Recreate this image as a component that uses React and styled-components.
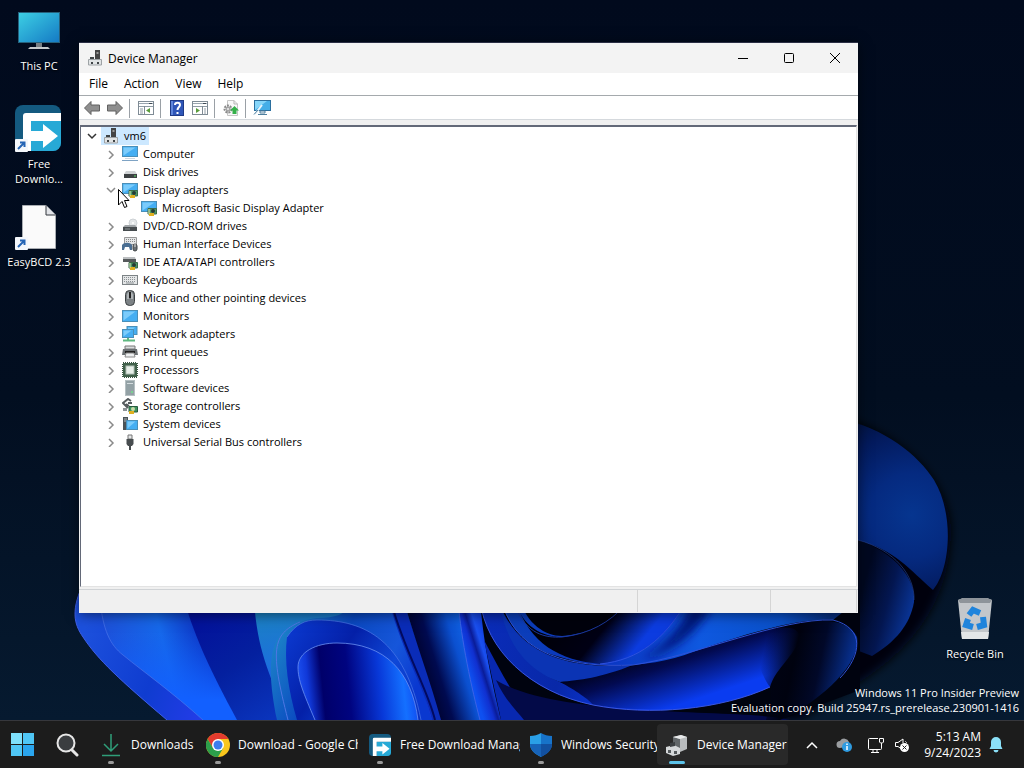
import React, { useState } from 'react'
import styled, { createGlobalStyle } from 'styled-components'

const GlobalStyle = createGlobalStyle`
  * {
    box-sizing: border-box;
  }
  body {
    margin: 0;
    background: #020b1c;
    font-family: 'Open Sans', 'Noto Sans', sans-serif;
    font-size: 12px;
  }
  button {
    font: inherit;
    color: inherit;
    background: none;
    border: 0;
    padding: 0;
  }
  ul {
    list-style: none;
    margin: 0;
    padding: 0;
  }
  svg {
    display: block;
    flex: none;
  }
`

const Screen = styled.div`
  display: grid;
  grid-template-rows: 1fr auto;
  height: 100vh;
  min-height: 480px;
`

const Desktop = styled.main`
  position: relative;
  overflow: hidden;
`

const WallpaperSvg = styled.svg`
  position: absolute;
  inset: 0;
  width: 100%;
  height: 100%;
`

/* desktop icons */

const ShortcutColumn = styled.div`
  position: absolute;
  top: 7px;
  left: 0;
  width: 78px;
`

const BinSpot = styled.div`
  position: absolute;
  right: 10px;
  bottom: 27px;
  width: 78px;
`

const ShortcutButton = styled.button`
  display: flex;
  flex-direction: column;
  align-items: center;
  gap: 3px;
  width: 100%;
  height: 98px;
  padding: 0 6px;
  color: #fff;
  font-size: 11px;
  line-height: 15px;
  text-shadow: 0 1px 2px #000;
  text-align: center;
`

const Watermark = styled.p`
  position: absolute;
  right: 5px;
  bottom: 5px;
  margin: 0;
  color: #fff;
  font-size: 11px;
  line-height: 15px;
  text-align: right;
`

const Pointer = styled.svg`
  position: absolute;
  top: 188px;
  left: 117px;
`

/* device manager window */

const Window = styled.section`
  position: absolute;
  top: 42px;
  right: 166px;
  bottom: 107px;
  left: 79px;
  display: flex;
  flex-direction: column;
  border-top: 1px solid #2b2f45;
  background: #f0f0f0;
  color: #000;
  box-shadow: 0 2px 12px rgba(0, 0, 0, 0.5);
`

const TitleBar = styled.header`
  display: flex;
  align-items: center;
  height: 30px;
  padding-left: 8px;
  background: #f3f3f3;
`

const Title = styled.h1`
  flex: 1;
  margin: 0 0 0 5px;
  font-size: 12px;
  font-weight: 400;
`

const CaptionButton = styled.button`
  display: grid;
  place-items: center;
  width: 46px;
  height: 100%;
  &:hover {
    background: #e5e5e5;
  }
`

const MenuBar = styled.nav`
  display: flex;
  height: 23px;
  padding-left: 2px;
  background: #fff;
  border-bottom: 1px solid #a5aaad;
`

const MenuButton = styled.button`
  padding: 0 8px;
  font-size: 12px;
  line-height: 20px;
  &:hover {
    background: #cce8ff;
  }
`

const Toolbar = styled.div`
  display: flex;
  align-items: center;
  height: 24px;
  padding: 1px 0 0 1px;
  background: #fff;
  border-bottom: 1px solid #d5d9dd;
`

const ToolButton = styled.button`
  display: grid;
  place-items: center;
  width: 23px;
  height: 22px;
`

const Separator = styled.span`
  width: 1px;
  height: 19px;
  margin: 0 4px 0 3px;
  background: #9aa0a6;
`

const TreePane = styled.div`
  flex: 1;
  min-height: 0;
  margin: 5px 1px 0;
  overflow: hidden;
  background: #fff;
  border: 1px solid #636978;
  border-top-width: 2px;
  border-right-color: #e3e3e3;
  border-bottom-color: #e3e3e3;
`

const Row = styled.div`
  display: flex;
  align-items: center;
  height: 18px;
  padding-left: ${({ $level }) => 1 + $level * 19}px;
`

const Twisty = styled.button`
  display: grid;
  place-items: center;
  width: 19px;
  height: 18px;
`

const TwistySpace = styled.span`
  width: 19px;
`

const NodeBody = styled.span`
  display: flex;
  align-items: center;
  gap: 5px;
  padding: 0 3px 0 2px;
  font-size: 11px;
  line-height: 18px;
  background: ${({ $selected }) => ($selected ? '#cce8ff' : 'transparent')};
`

const StatusBar = styled.footer`
  display: flex;
  height: 24px;
  margin-top: 2px;
  padding-right: 1px;
  border-top: 1px solid #d0d3d6;
`

const StatusCell = styled.div`
  flex: ${({ $width }) => ($width ? `0 0 ${$width}px` : '1')};
  margin-bottom: 1px;
  border-right: 1px solid #d5d5d5;
`

/* taskbar */

const TaskbarWrapper = styled.footer`
  display: flex;
  height: 48px;
  padding-left: 1px;
  background: #1c1c1c;
  border-top: 1px solid #36373c;
  color: #fff;
`

const PinButton = styled.button`
  display: grid;
  place-items: center;
  width: 44px;
`

const TaskList = styled.nav`
  display: flex;
  flex: 1;
  min-width: 0;
  margin-left: 2px;
`

const TaskButton = styled.button`
  position: relative;
  display: flex;
  align-items: center;
  gap: 8px;
  flex: 0 1 ${({ $width }) => $width}px;
  min-width: 40px;
  margin: 3px 0;
  padding-left: 8px;
  border-radius: 4px;
  background: ${({ $active }) => ($active ? '#292929' : 'transparent')};
  &::after {
    content: '';
    position: absolute;
    bottom: 1px;
    left: 20px;
    width: ${({ $active }) => ($active ? 16 : 6)}px;
    height: 3px;
    border-radius: 2px;
    background: ${({ $active }) => ($active ? '#5cc3ea' : '#9a9a9a')};
    transform: translateX(-50%);
  }
`

const TaskLabel = styled.span`
  max-width: 120px;
  overflow: hidden;
  font-size: 12px;
  line-height: 20px;
  white-space: nowrap;
`

const Tray = styled.div`
  display: flex;
  flex: none;
  align-items: center;
  padding-right: 14px;
`

const TrayButton = styled.button`
  display: grid;
  place-items: center;
  width: ${({ $width }) => $width || 32}px;
  height: 40px;
`

const ClockButton = styled.button`
  width: 69px;
  font-size: 12px;
  line-height: 16px;
  text-align: right;
`

const Wallpaper = () => (
  <WallpaperSvg viewBox="0 0 1024 720" preserveAspectRatio="xMidYMid slice" aria-hidden="true">
    <defs>
      <linearGradient id="sky" x1="0" y1="0" x2="0" y2="1">
        <stop offset="0" stopColor="#010a1d" />
        <stop offset="0.55" stopColor="#020e20" />
        <stop offset="1" stopColor="#061a30" />
      </linearGradient>
      <linearGradient id="petalA" gradientUnits="userSpaceOnUse" x1="80" y1="640" x2="230" y2="700">
        <stop offset="0" stopColor="#1c50dc" />
        <stop offset="0.5" stopColor="#0f3cd0" />
        <stop offset="1" stopColor="#2a3cf0" />
      </linearGradient>
      <linearGradient id="petalB" gradientUnits="userSpaceOnUse" x1="105" y1="640" x2="225" y2="610">
        <stop offset="0" stopColor="#1d50d8" />
        <stop offset="0.45" stopColor="#1668ea" />
        <stop offset="0.8" stopColor="#0c30c0" />
        <stop offset="1" stopColor="#061c9c" />
      </linearGradient>
      <linearGradient id="petalBLow" gradientUnits="userSpaceOnUse" x1="0" y1="630" x2="0" y2="700">
        <stop offset="0" stopColor="#1060ff" stopOpacity="0" />
        <stop offset="1" stopColor="#1260ff" />
      </linearGradient>
      <linearGradient id="deep" gradientUnits="userSpaceOnUse" x1="200" y1="613" x2="270" y2="720">
        <stop offset="0" stopColor="#03119a" />
        <stop offset="0.5" stopColor="#04209f" />
        <stop offset="1" stopColor="#0a34bc" />
      </linearGradient>
      <linearGradient id="teal" gradientUnits="userSpaceOnUse" x1="270" y1="613" x2="290" y2="715">
        <stop offset="0" stopColor="#1b80c4" />
        <stop offset="0.5" stopColor="#1c70dc" />
        <stop offset="1" stopColor="#2440f0" />
      </linearGradient>
      <linearGradient id="band" gradientUnits="userSpaceOnUse" x1="290" y1="613" x2="420" y2="680">
        <stop offset="0" stopColor="#1b80c8" />
        <stop offset="0.4" stopColor="#0a48c0" />
        <stop offset="0.75" stopColor="#1656da" />
        <stop offset="1" stopColor="#0a38d0" />
      </linearGradient>
      <linearGradient id="arch" gradientUnits="userSpaceOnUse" x1="285" y1="620" x2="420" y2="710">
        <stop offset="0" stopColor="#0c3cd4" />
        <stop offset="0.4" stopColor="#0420a8" />
        <stop offset="0.7" stopColor="#0e48d8" />
        <stop offset="1" stopColor="#0830c0" />
      </linearGradient>
      <linearGradient id="cave" gradientUnits="userSpaceOnUse" x1="298" y1="680" x2="416" y2="668">
        <stop offset="0" stopColor="#1c50f0" />
        <stop offset="0.08" stopColor="#1038d8" />
        <stop offset="0.2" stopColor="#00006a" />
        <stop offset="0.42" stopColor="#000480" />
        <stop offset="0.68" stopColor="#0838d8" />
        <stop offset="0.88" stopColor="#1470ff" />
        <stop offset="1" stopColor="#1048f0" />
      </linearGradient>
      <linearGradient id="fold" gradientUnits="userSpaceOnUse" x1="415" y1="665" x2="480" y2="645">
        <stop offset="0" stopColor="#000024" />
        <stop offset="0.3" stopColor="#000a50" />
        <stop offset="0.65" stopColor="#0b50d0" />
        <stop offset="1" stopColor="#1470f4" />
      </linearGradient>
      <linearGradient id="stem" gradientUnits="userSpaceOnUse" x1="465" y1="660" x2="497" y2="650">
        <stop offset="0" stopColor="#0e50f0" />
        <stop offset="0.3" stopColor="#1030d0" />
        <stop offset="0.42" stopColor="#0a1c98" />
        <stop offset="0.6" stopColor="#1a50f0" />
        <stop offset="1" stopColor="#0a34d0" />
      </linearGradient>
      <linearGradient id="waveLow" gradientUnits="userSpaceOnUse" x1="490" y1="620" x2="720" y2="710">
        <stop offset="0" stopColor="#0a2cb8" />
        <stop offset="0.35" stopColor="#0828a8" />
        <stop offset="0.7" stopColor="#0a3cf0" />
        <stop offset="1" stopColor="#0a3ce8" />
      </linearGradient>
      <linearGradient id="waveCore" gradientUnits="userSpaceOnUse" x1="650" y1="648" x2="670" y2="708">
        <stop offset="0" stopColor="#000012" />
        <stop offset="0.35" stopColor="#020a50" />
        <stop offset="1" stopColor="#0a3cf0" />
      </linearGradient>
      <linearGradient id="waveTop" gradientUnits="userSpaceOnUse" x1="505" y1="613" x2="830" y2="613">
        <stop offset="0" stopColor="#0c40b8" />
        <stop offset="0.3" stopColor="#0a34c0" />
        <stop offset="0.6" stopColor="#0e58e0" />
        <stop offset="0.85" stopColor="#0a50c8" />
        <stop offset="1" stopColor="#083080" />
      </linearGradient>
      <linearGradient id="lobe" gradientUnits="userSpaceOnUse" x1="764" y1="650" x2="866" y2="672">
        <stop offset="0" stopColor="#000318" stopOpacity="0" />
        <stop offset="0.3" stopColor="#00020f" />
        <stop offset="0.55" stopColor="#010828" />
        <stop offset="1" stopColor="#0a44c4" />
      </linearGradient>
      <linearGradient id="inkFold" gradientUnits="userSpaceOnUse" x1="560" y1="610" x2="625" y2="662">
        <stop offset="0" stopColor="#000008" />
        <stop offset="0.55" stopColor="#000014" />
        <stop offset="1" stopColor="#0c3ce0" />
      </linearGradient>
      <radialGradient id="right" gradientUnits="userSpaceOnUse" cx="912" cy="515" r="120">
        <stop offset="0" stopColor="#06358f" />
        <stop offset="0.35" stopColor="#052a80" />
        <stop offset="0.7" stopColor="#031a5c" />
        <stop offset="1" stopColor="#020f30" />
      </radialGradient>
      <linearGradient id="rightInner" gradientUnits="userSpaceOnUse" x1="862" y1="590" x2="916" y2="605">
        <stop offset="0" stopColor="#010820" />
        <stop offset="0.5" stopColor="#031650" />
        <stop offset="1" stopColor="#0a379c" />
      </linearGradient>
      <filter id="soft" x="-20%" y="-20%" width="140%" height="140%">
        <feGaussianBlur stdDeviation="5" />
      </filter>
    </defs>
    <rect width="1024" height="720" fill="url(#sky)" />
    {/* right side petals */}
    <path d="M840 418C890 428 960 480 950 545C946 600 915 645 867 677L800 720H500V420Z" fill="#00040f" filter="url(#soft)" />
    <path d="M840 419C885 428 918 455 934 480C955 515 950 570 933 590C910 570 895 550 858 540H800Z" fill="url(#right)" />
    <path d="M840 536C880 542 916 570 914 602C910 625 895 642 872 656L830 640Z" fill="url(#rightInner)" />
    <path d="M858 540C895 550 915 576 914 600" fill="none" stroke="#2448a0" strokeOpacity="0.6" />
    {/* bottom, left to right */}
    <path d="M85 580C70 610 74 624 83 637C98 660 120 680 167 720H720V580Z" fill="url(#petalA)" />
    <path d="M85 580C70 610 74 624 83 637C98 660 120 680 167 720" fill="none" stroke="#3f5ee6" />
    <path d="M100 600C103 630 110 645 123 655C145 673 172 692 203 720H300V600Z" fill="url(#petalB)" />
    <path d="M100 600C103 630 110 645 123 655C145 673 172 692 203 720H300V600Z" fill="url(#petalBLow)" />
    <path d="M100 600C103 630 110 645 123 655C145 673 172 692 203 720" fill="none" stroke="#4a74ea" strokeOpacity="0.7" />
    <path d="M184 600C196 640 210 670 237 720H320V600Z" fill="url(#deep)" />
    <path d="M254 600C257 648 268 672 288 720H420V600Z" fill="url(#teal)" />
    <path d="M277 720C262 645 275 624 317 618C355 618 350 600 346 600H398C405 640 424 690 432 720Z" fill="url(#band)" />
    <path d="M288 720C270 650 272 634 300 622" fill="none" stroke="#4f76e4" />
    <path d="M297 720C288 690 284 660 287 637C296 624 305 620 317 620C365 620 405 640 421 720Z" fill="url(#arch)" />
    <path d="M287 637C296 624 305 620 317 620C365 620 405 640 421 720" fill="none" stroke="#4c78e8" strokeOpacity="0.7" />
    <path d="M315 720C303 692 298 680 298 667C298 652 316 643 337 643C385 643 412 672 418 720Z" fill="url(#cave)" />
    <path d="M315 720C303 692 298 680 298 667C298 652 316 643 337 643C385 643 412 672 418 720" fill="none" stroke="#6a90f2" strokeOpacity="0.8" />
    <path d="M390 605C402 650 425 690 432 720H444C432 680 415 640 405 605Z" fill="#0a2cb8" />
    <path d="M392 605C404 650 428 690 435 720" fill="none" stroke="#020a60" strokeWidth="2" />
    <path d="M405 605C415 640 430 680 441 720H500V600Z" fill="url(#fold)" />
    <path d="M458 600C461 640 472 690 480 720H512L494 600Z" fill="url(#stem)" />
    <path d="M458 600C461 640 472 690 480 720" fill="none" stroke="#3c62e6" />
    <path d="M480 600C484 650 494 690 501 720H780L860 690V600Z" fill="#00030f" />
    <path d="M484 640C500 670 515 700 534 720H501Z" fill="#0828b0" />
    <path d="M496 680C505 700 516 710 524 720H790C750 708 560 720 496 680Z" fill="#030a48" />
    <path d="M480 600C486 650 530 692 593 705C650 716 720 710 770 687C720 690 600 700 560 682C530 670 505 640 500 600Z" fill="url(#waveLow)" />
    <path d="M560 682C610 676 680 650 760 632C785 625 800 625 800 640C790 660 775 670 770 687C720 709 650 714 593 705C590 700 575 690 560 682Z" fill="url(#waveCore)" />
    <path d="M480 600C486 650 530 692 593 705C650 716 720 710 770 687" fill="none" stroke="#3a56e0" />
    <path d="M500 600C510 630 530 650 560 657C600 670 650 668 693 652C750 632 800 618 833 620L858 600Z" fill="url(#waveTop)" />
    <path d="M500 605C520 655 570 670 633 665C600 678 580 680 560 682C525 670 505 640 500 605Z" fill="#0b34b4" />
    <path d="M515 600C522 628 545 638 565 637C585 634 610 622 625 605H685C665 640 635 660 600 664C560 660 530 645 515 600Z" fill="url(#inkFold)" />
    <path d="M520 600C527 624 545 636 562 636C590 634 610 622 625 605Z" fill="#00020c" />
    <path d="M516 608C527 634 545 638 562 637C590 634 610 622 625 605" fill="none" stroke="#1b389c" />
    <path d="M684 606C664 638 640 660 600 664" fill="none" stroke="#2d50e0" />
    <path d="M690 606C680 630 660 650 640 660C670 655 700 630 712 606Z" fill="#04147a" filter="url(#soft)" />
    <path d="M750 636C800 620 845 612 857 637C862 665 815 705 780 720H766C770 705 772 697 770 687C764 680 756 660 750 636Z" fill="url(#lobe)" />
    <path d="M503 606C520 655 570 668 633 665C700 655 780 618 833 620C865 628 862 655 840 678" fill="none" stroke="#2f52d8" />
  </WallpaperSvg>
)

/* 16px device glyphs, one drawing for every kind of node */

const Screen16 = ({ x = 0.5, y = 1.5, w = 15, h = 10 }) => (
  <>
    <rect x={x} y={y} width={w} height={h} fill="#45aef2" stroke="#4a8fb8" />
    <path d={`M${x + 1} ${y + h - 1}L${x + w - 2} ${y + 1}H${x + 1}Z`} fill="#7cccfb" />
  </>
)

const Chip = () => (
  <>
    <path d="M7 8.500H15.500V14H7Z" fill="#4f9a68" stroke="#3c6b4a" />
    <path d="M8 13h5v3H8z" fill="#e0b020" />
    <circle cx="12" cy="11" r="2" fill="#243b36" />
    <path d="M8 9v5" stroke="#d8e6b8" />
  </>
)

const glyphs = {
  machine: (
    <>
      <path d="M8 0h5v9H8z" fill="#444" />
      <path d="M9.500 2h2v2h-2z" fill="#999" />
      <path d="M1.500 9.500h13V15H1.500z" fill="#e1e4e5" stroke="#9ea3a6" />
      <path d="M3 7h4v2H3zM4 12h2v2H4zM10 12h2v2h-2z" fill="#3f4446" />
    </>
  ),
  computer: (
    <>
      <Screen16 y={0.5} />
      <path d="M0 14.500h16" stroke="#7ea3c4" />
      <path d="M3 12.500h10" stroke="#cfd8df" />
    </>
  ),
  disk: (
    <>
      <path d="M4 7h9l2 3H2z" fill="#d0d3d5" />
      <path d="M2 10h13v4H2z" fill="#3d4143" />
      <path d="M12 12h2" stroke="#5fe06a" />
    </>
  ),
  display: (
    <>
      <Screen16 />
      <Chip />
    </>
  ),
  dvd: (
    <>
      <circle cx="11" cy="5" r="4" fill="#e2e5e7" stroke="#ced2d5" />
      <circle cx="11" cy="5" r="1" fill="#fff" />
      <path d="M3 7h10l2 2H1z" fill="#9fa4a7" />
      <path d="M1 9h14v4H1z" fill="#474c4f" />
      <path d="M3 11h5" stroke="#8e9497" />
    </>
  ),
  hid: (
    <>
      <path d="M2.500 1.500h12v7h-12z" fill="#e4e6e7" stroke="#999" />
      <path d="M4 3.500h10M4 5.500h10" stroke="#888" strokeDasharray="1 1" />
      <path d="M0 14V9c2-3 8-3 10 0v5H8L7 11H3l-1 3z" fill="#4b6f93" />
      <rect x="11" y="8" width="4" height="7" rx="2" fill="#6a7074" stroke="#3f4446" />
      <path d="M13 8v3" stroke="#ddd" />
    </>
  ),
  ide: (
    <>
      <path d="M1 3h12l1 3H1z" fill="#bcbfc1" />
      <path d="M1 5h13v3H1z" fill="#55595b" />
      <Chip />
    </>
  ),
  keyboard: (
    <>
      <rect x="0.5" y="3.500" width="15" height="9" fill="#e4e6e7" stroke="#7d8386" />
      <path d="M2 5.500h12M2 7.500h12M2 9.500h12" stroke="#8b9194" strokeDasharray="1 1" />
      <path d="M4 11h8" stroke="#8b9194" />
    </>
  ),
  mouse: (
    <>
      <rect x="3.500" y="0.5" width="9" height="15" rx="4" fill="#7c8285" stroke="#3c4143" />
      <path d="M5 9V5c0-2 2-3 2-3v7zM9 2s2 1 2 3v4H9z" fill="#aeb3b6" />
      <path d="M8 2v6" stroke="#222" strokeWidth="2" />
    </>
  ),
  monitor: <Screen16 x={0.5} y={2.5} w={15} h={11} />,
  network: (
    <>
      <Screen16 x={5} y={0.5} w={10} h={8} />
      <Screen16 x={0.5} y={3.5} w={11} h={8} />
      <path d="M6 12v2M1 14.500h12" stroke="#5fb880" strokeWidth="2" />
    </>
  ),
  printer: (
    <>
      <path d="M3 2h10v3H3z" fill="#d9dcdd" stroke="#777" />
      <path d="M1 5h14l1 6H0z" fill="#6b7073" />
      <path d="M3 8h10" stroke="#222" strokeWidth="2" />
      <path d="M4 9h8l1 4H3z" fill="#eef0f1" stroke="#888" />
    </>
  ),
  cpu: (
    <>
      <rect x="1" y="1" width="14" height="14" fill="none" stroke="#37513f" strokeWidth="2" strokeDasharray="1 1" />
      <rect x="1" y="1" width="14" height="14" fill="#41604a" />
      <rect x="4" y="4" width="8" height="8" fill="#e8efe9" stroke="#b4c2b8" />
    </>
  ),
  software: (
    <>
      <rect x="3.500" y="0.5" width="9" height="15" fill="#93a1a5" stroke="#b5bfc2" />
      <path d="M5 3.500h6" stroke="#d4dcdf" />
      <circle cx="10" cy="12" r="1" fill="#6fe08a" />
    </>
  ),
  storage: (
    <>
      <path d="M9 3L6 1L1 5L6 10M6 5h4M4 6l3 2" fill="none" stroke="#555b5e" strokeWidth="2" />
      <path d="M7 8.500h8.500V14H7z" fill="#3f9460" stroke="#285c3e" />
      <circle cx="11" cy="11" r="2" fill="#c9dca8" />
      <path d="M1 10h4v3H1z" fill="#8d9295" />
      <path d="M7 13h5v3H7z" fill="#e0b020" />
    </>
  ),
  system: (
    <>
      <path d="M1 1h5v13H1z" fill="#4b5357" />
      <path d="M2 3h3M2 5h3" stroke="#aeb6ba" />
      <Screen16 x={4.5} y={4.5} w={11} h={9} />
    </>
  ),
  usb: (
    <>
      <path d="M6 1h4v4H6z" fill="#e5e7e8" stroke="#777" />
      <path d="M4.500 5h7v5L10 12H6L4.500 10z" fill="#474c4f" />
      <path d="M8 12v4" stroke="#474c4f" strokeWidth="2" />
    </>
  ),
}

const Glyph = ({ name }) => (
  <svg width="16" height="16" viewBox="0 0 16 16" aria-hidden="true">
    {glyphs[name]}
  </svg>
)

const devices = [
  { label: 'Computer', icon: 'computer' },
  { label: 'Disk drives', icon: 'disk' },
  {
    label: 'Display adapters',
    icon: 'display',
    items: [{ label: 'Microsoft Basic Display Adapter', icon: 'display' }],
  },
  { label: 'DVD/CD-ROM drives', icon: 'dvd' },
  { label: 'Human Interface Devices', icon: 'hid' },
  { label: 'IDE ATA/ATAPI controllers', icon: 'ide' },
  { label: 'Keyboards', icon: 'keyboard' },
  { label: 'Mice and other pointing devices', icon: 'mouse' },
  { label: 'Monitors', icon: 'monitor' },
  { label: 'Network adapters', icon: 'network' },
  { label: 'Print queues', icon: 'printer' },
  { label: 'Processors', icon: 'cpu' },
  { label: 'Software devices', icon: 'software' },
  { label: 'Storage controllers', icon: 'storage' },
  { label: 'System devices', icon: 'system' },
  { label: 'Universal Serial Bus controllers', icon: 'usb' },
]

const TreeNode = ({ node, level = 0, leaf = false }) => {
  const [open, setOpen] = useState(Boolean(node.items))

  return (
    <li>
      <Row $level={level}>
        {leaf ? (
          <TwistySpace />
        ) : (
          <Twisty
            type="button"
            aria-label={`Toggle ${node.label}`}
            aria-expanded={open}
            onClick={() => setOpen(!open)}
          >
            <svg width="10" height="10" viewBox="0 0 10 10" fill="none" stroke={level ? '#8a8a8a' : '#333'} strokeWidth="1.5">
              <path d={open ? 'M1 3L5 7L9 3' : 'M3 2L7 6L3 10'} />
            </svg>
          </Twisty>
        )}
        <NodeBody $selected={level === 0}>
          <Glyph name={node.icon} />
          {node.label}
        </NodeBody>
      </Row>
      {open && node.items && (
        <ul>
          {node.items.map((item) => (
            <TreeNode key={item.label} node={item} level={level + 1} leaf={level === 1} />
          ))}
        </ul>
      )}
    </li>
  )
}

const ConsolePane = ({ flip = false }) => (
  <svg width="16" height="16" viewBox="0 0 16 16">
    <rect x="0.5" y="1.500" width="15" height="13" fill="#fff" stroke="#7f8b95" />
    <path d="M1 3.500h14" stroke="#9aa6b0" />
    <path d="M11 3.500h3" stroke="#3f4a54" />
    <path d="M1 6.500h14" stroke="#8f9ba5" />
    {flip ? (
      <>
        <path d="M10.500 6v8" stroke="#7f8b95" />
        <path d="M12 9h2M12 11h2M12 13h2" stroke="#8f9ba5" />
        <path d="M4 8l4 2.500L4 13z" fill="#5a9c3c" />
      </>
    ) : (
      <>
        <path d="M6.500 6v8" stroke="#7f8b95" />
        <path d="M2 9h3M2 11h3M2 13h3" stroke="#8f9ba5" />
        <path d="M12 8L8 10.500L12 13z" fill="#5a9c3c" />
      </>
    )}
  </svg>
)

const Arrow = ({ forward = false }) => (
  <svg width="16" height="16" viewBox="0 0 16 16">
    <path
      d={forward ? 'M15.500 8L9 1.500V5H0.500v6H9v3.500z' : 'M0.500 8L7 1.500V5h8.500v6H7v3.500z'}
      fill="#8f8f8f"
      stroke="#616161"
    />
  </svg>
)

const DeviceManager = () => (
  <Window aria-label="Device Manager">
    <TitleBar>
      <Glyph name="machine" />
      <Title>Device Manager</Title>
      <CaptionButton type="button" aria-label="Minimize">
        <svg width="10" height="10" viewBox="0 0 10 10" stroke="#000">
          <path d="M0 5.500h10" />
        </svg>
      </CaptionButton>
      <CaptionButton type="button" aria-label="Maximize">
        <svg width="10" height="10" viewBox="0 0 10 10" fill="none" stroke="#000">
          <rect x="0.5" y="0.5" width="9" height="9" rx="1" />
        </svg>
      </CaptionButton>
      <CaptionButton type="button" aria-label="Close">
        <svg width="10" height="10" viewBox="0 0 10 10" stroke="#000">
          <path d="M0 0L10 10M10 0L0 10" />
        </svg>
      </CaptionButton>
    </TitleBar>
    <MenuBar>
      {['File', 'Action', 'View', 'Help'].map((name) => (
        <MenuButton type="button" key={name}>{name}</MenuButton>
      ))}
    </MenuBar>
    <Toolbar>
      <ToolButton type="button" aria-label="Back"><Arrow /></ToolButton>
      <ToolButton type="button" aria-label="Forward"><Arrow forward /></ToolButton>
      <Separator />
      <ToolButton type="button" aria-label="Show or hide console tree"><ConsolePane /></ToolButton>
      <Separator />
      <ToolButton type="button" aria-label="Help topics">
        <svg width="14" height="16" viewBox="0 0 14 16">
          <rect x="0.5" y="0.5" width="13" height="15" fill="#2f56b8" stroke="#1f3a86" />
          <path d="M1 1h2v14H1z" fill="#5f86dc" />
          <path d="M5 5c0-3 5-3 5 0c0 2-2.500 2-2.500 5M7.500 12v2" fill="none" stroke="#fff" strokeWidth="2" />
        </svg>
      </ToolButton>
      <ToolButton type="button" aria-label="Show action pane"><ConsolePane flip /></ToolButton>
      <Separator />
      <ToolButton type="button" aria-label="Scan for hardware changes">
        <svg width="16" height="16" viewBox="0 0 16 16">
          <path d="M4.500 0.500H11L14.500 4V15.500H4.500z" fill="#f8f8f8" stroke="#c5c5c5" />
          <path d="M11 0.500V4h3.500" fill="none" stroke="#b5b5b5" />
          <circle cx="5" cy="9" r="3.500" fill="none" stroke="#8a8a8a" strokeWidth="2" strokeDasharray="2 1" />
          <circle cx="5" cy="9" r="2" fill="#ddd" stroke="#8a8a8a" />
          <path d="M11.500 6L16 10.500H13.500V14H9.500V10.500H7z" fill="#35b04a" />
        </svg>
      </ToolButton>
      <Separator />
      <ToolButton type="button" aria-label="Add drivers">
        <svg width="18" height="16" viewBox="0 0 18 16">
          <rect x="1.500" y="0.500" width="16" height="10" fill="#45aee8" stroke="#2b6f9e" />
          <path d="M2 10L14 1H2z" fill="#86d6fa" />
          <path d="M2 14L9 5" stroke="#e8f4fb" strokeWidth="2" />
          <path d="M1 14.500L5 10M7 11h5v2H7zM5 14.500h9" fill="none" stroke="#4f7f9e" />
        </svg>
      </ToolButton>
    </Toolbar>
    <TreePane>
      <ul>
        <TreeNode node={{ label: 'vm6', icon: 'machine', items: devices }} />
      </ul>
    </TreePane>
    <StatusBar>
      <StatusCell />
      <StatusCell $width={133} />
      <StatusCell $width={86} />
    </StatusBar>
  </Window>
)

const FdmMark = () => (
  <>
    <rect width="46" height="46" rx="8" fill="#145a80" />
    <path d="M16 16H46V38a8 8 0 0 1-8 8H16z" fill="#27a9d6" />
    <path d="M8 46V11q0-3 3-3H46v8H16v10H28V19L43 31L28 43V36H16V46z" fill="#fff" />
  </>
)

const ShortcutArrow = () => (
  <>
    <rect x="0" y="34" width="13" height="13" rx="1" fill="#f4f7fb" />
    <path d="M3 44L9 38M5 37.500H9.500V42" fill="none" stroke="#2565b5" strokeWidth="2" />
  </>
)

const desktopIcons = [
  {
    label: 'This PC',
    art: (
      <>
        <defs>
          <linearGradient id="pc" x1="0" y1="0" x2="1" y2="1">
            <stop offset="0" stopColor="#3dd0e4" />
            <stop offset="1" stopColor="#1479c4" />
          </linearGradient>
        </defs>
        <rect x="3.500" y="5.500" width="41" height="30" fill="url(#pc)" stroke="#26617c" />
        <path d="M21 36h6v4h-6z" fill="#777e83" />
        <path d="M15 40h18l2 2H13z" fill="#c5c9cc" />
      </>
    ),
  },
  {
    label: 'Free Downlo...',
    art: (
      <>
        <FdmMark />
        <ShortcutArrow />
      </>
    ),
  },
  {
    label: 'EasyBCD 2.3',
    art: (
      <>
        <path d="M7.500 2.500H31L40.500 12V45.500H7.500z" fill="#fafafa" stroke="#a9adb2" />
        <path d="M31 2.500V12h9.500" fill="#e2e4e8" stroke="#33373c" />
        <ShortcutArrow />
      </>
    ),
  },
]

const Shortcut = ({ label, children }) => (
  <ShortcutButton type="button">
    <svg width="48" height="48" viewBox="0 0 48 48" aria-hidden="true">{children}</svg>
    {label}
  </ShortcutButton>
)

const tasks = [
  {
    label: 'Downloads',
    width: 107,
    art: <path d="M12 1V18M5 11L12 18L19 11M3 22.500H21" fill="none" stroke="#2f9e79" strokeWidth="1.5" />,
  },
  {
    label: 'Download - Google Chrome',
    width: 162,
    art: (
      <>
        <circle cx="12" cy="12" r="12" fill="#f9c61d" />
        <path d="M1.600 6A12 12 0 0 1 22.400 6H12L7 15z" fill="#e33b2e" />
        <path d="M1.600 6A12 12 0 0 0 12 24L17.200 15L7 15z" fill="#2c9f4b" />
        <circle cx="12" cy="12" r="6" fill="#fff" />
        <circle cx="12" cy="12" r="4.500" fill="#3b7ded" />
      </>
    ),
  },
  {
    label: 'Free Download Manager',
    width: 161,
    art: (
      <svg x="1" y="1" width="22" height="22" viewBox="0 0 46 46">
        <FdmMark />
      </svg>
    ),
  },
  {
    label: 'Windows Security',
    width: 136,
    art: (
      <>
        <path d="M12 0C9 2 5 3 1 3V11C1 17 6 21 12 24z" fill="#2a9fe6" />
        <path d="M12 0C15 2 19 3 23 3V11C23 17 18 21 12 24z" fill="#1773c9" />
        <path d="M1 11H12V24C6 21 1 17 1 11z" fill="#1763b8" />
        <path d="M12 11H23C23 17 18 21 12 24z" fill="#1250a0" />
      </>
    ),
  },
  {
    label: 'Device Manager',
    width: 131,
    active: true,
    art: (
      <>
        <path d="M8 4L16 2L22 4V16L15 19L8 16z" fill="#b9bcbe" />
        <path d="M8 4L15 6V19L8 16z" fill="#62676a" />
        <path d="M8 4L16 2L22 4L15 6z" fill="#e8eaeb" />
        <path d="M1 14L9 12L15 15V21L8 23L1 20z" fill="#d5d8da" />
        <path d="M5 10L10 9V13L5 14z" fill="#3c4043" />
        <path d="M3 17h3v3H3zM9 18h3v3H9z" fill="#54595c" />
      </>
    ),
  },
]

const Taskbar = () => (
  <TaskbarWrapper>
    <PinButton type="button" aria-label="Start">
      <svg width="24" height="24" viewBox="0 0 24 24">
        <path d="M0 0h11v11H0z" fill="#7fe0fb" />
        <path d="M12 0h11v11H12zM0 12h11v11H0z" fill="#4fc6f5" />
        <path d="M12 12h11v11H12z" fill="#2aa5ee" />
      </svg>
    </PinButton>
    <PinButton type="button" aria-label="Search">
      <svg width="24" height="24" viewBox="0 0 24 24" fill="#3a3d40" stroke="#e6e6e6" strokeLinecap="round">
        <circle cx="11" cy="10" r="8.500" strokeWidth="2" />
        <path d="M17 17L22 22" strokeWidth="3" />
      </svg>
    </PinButton>
    <TaskList aria-label="Open windows">
      {tasks.map((task) => (
        <TaskButton type="button" key={task.label} $width={task.width} $active={task.active}>
          <svg width="24" height="24" viewBox="0 0 24 24" aria-hidden="true">{task.art}</svg>
          <TaskLabel>{task.label}</TaskLabel>
        </TaskButton>
      ))}
    </TaskList>
    <Tray>
      <TrayButton type="button" aria-label="Show hidden icons">
        <svg width="12" height="8" viewBox="0 0 12 8" fill="none" stroke="#fff" strokeWidth="1.5">
          <path d="M1 7L6 2L11 7" />
        </svg>
      </TrayButton>
      <TrayButton type="button" aria-label="OneDrive">
        <svg width="16" height="16" viewBox="0 0 16 16">
          <path d="M4 11a3.500 3.500 0 0 1 0-7a5 5 0 0 1 9 1l1 4z" fill="#9a9da0" />
          <circle cx="11" cy="10" r="5" fill="#2f9be0" />
          <path d="M11 9v4M11 6.500v1.500" stroke="#fff" strokeWidth="1.5" />
        </svg>
      </TrayButton>
      <TrayButton type="button" aria-label="Network">
        <svg width="18" height="16" viewBox="0 0 18 16" fill="none" stroke="#fff">
          <path d="M11 1.500H2.500Q1.500 1.500 1.500 2.500V11.500Q1.500 12.500 2.500 12.500H13.500Q14.500 12.500 14.500 11.500V8M4 15.500h8M6 13v2M10 13v2" />
          <path d="M12.500 1.500h4v3.500l-1 1h-2l-1-1zM14.500 6v3" />
        </svg>
      </TrayButton>
      <TrayButton type="button" aria-label="Volume muted" $width={20}>
        <svg width="16" height="16" viewBox="0 0 16 16">
          <path d="M7.500 12L4 9.500H1.500V5.500H4L9 2V6" fill="none" stroke="#fff" />
          <path d="M11 4l2 2" stroke="#aaa" />
          <circle cx="10.500" cy="10.500" r="4.500" fill="#fff" />
          <path d="M8.500 8.500l4 4M12.500 8.500l-4 4" stroke="#222" />
        </svg>
      </TrayButton>
      <ClockButton type="button">
        5:13 AM
        <br />
        9/24/2023
      </ClockButton>
      <TrayButton type="button" aria-label="Notifications" $width={29}>
        <svg width="14" height="16" viewBox="0 0 14 16" fill="#8be0f8">
          <path d="M7 0a5 5 0 0 1 5 5v4l1.500 3H0.500L2 9V5a5 5 0 0 1 5-5z" />
          <path d="M4.500 13h5a2.500 2.500 0 0 1-5 0z" />
        </svg>
      </TrayButton>
    </Tray>
  </TaskbarWrapper>
)

const App = () => {
  return (
    <>
      <GlobalStyle />
      <Screen>
        <Desktop>
          <Wallpaper />
          <ShortcutColumn>
            {desktopIcons.map(({ label, art }) => (
              <Shortcut key={label} label={label}>{art}</Shortcut>
            ))}
          </ShortcutColumn>
          <BinSpot>
            <Shortcut label="Recycle Bin">
              <path d="M7 5L12 3H36L41 5L37 44H11z" fill="#c3c7cb" />
              <path d="M7 5L12 3H36L41 5L39 8H9z" fill="#8e949a" />
              <path d="M10 37H38L37 44H11z" fill="#e3e6e8" />
              <g fill="none" stroke="#1f84dc" strokeWidth="6">
                <path d="M18 20L22 15L29 18" />
                <path d="M32 22L33 30L26 32" />
                <path d="M22 32L15 30L17 24" />
              </g>
            </Shortcut>
          </BinSpot>
          <Watermark>
            Windows 11 Pro Insider Preview
            <br />
            Evaluation copy. Build 25947.rs_prerelease.230901-1416
          </Watermark>
          <DeviceManager />
          <Pointer width="13" height="21" viewBox="0 0 13 21">
            <path d="M1.500 1.500V17L5 13.500L7.500 19.500L10 18.500L7.500 12.500H12z" fill="#fff" stroke="#000" />
          </Pointer>
        </Desktop>
        <Taskbar />
      </Screen>
    </>
  )
}

export default App
